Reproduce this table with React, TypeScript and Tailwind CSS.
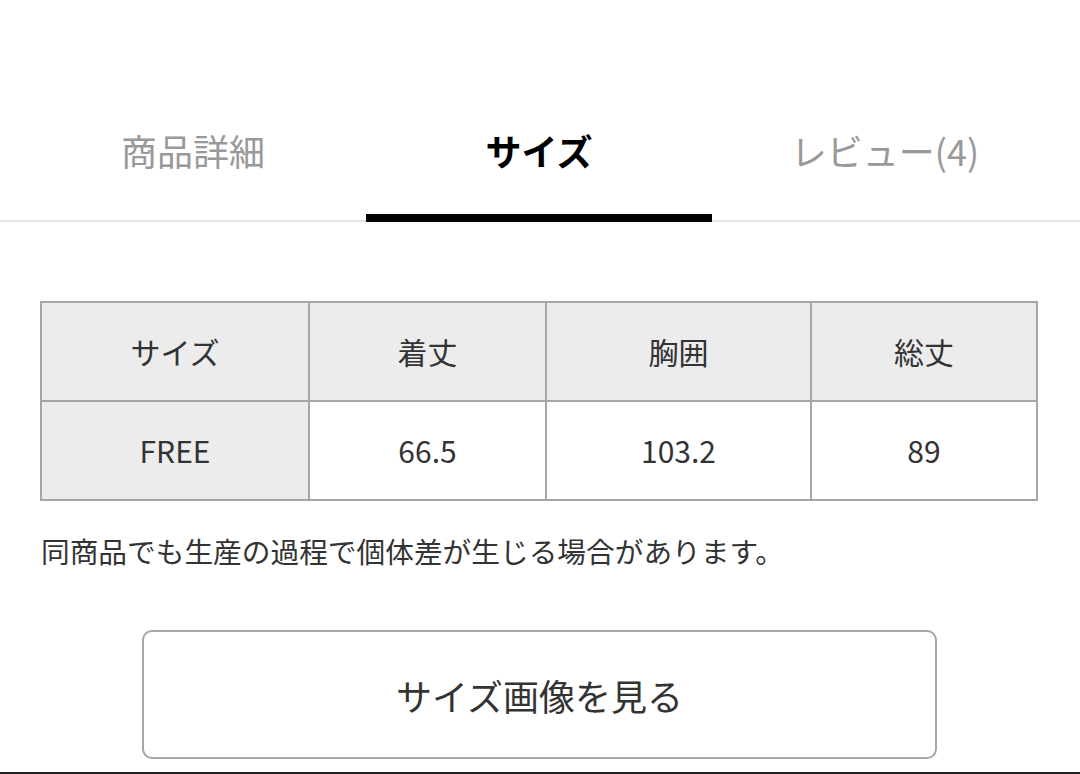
import React from 'react'

const font = { fontFamily: '"Noto Sans CJK JP", "Liberation Sans", sans-serif' }

const tabs = [
  { label: '商品詳細', active: false },
  { label: 'サイズ', active: true },
  { label: 'レビュー(4)', active: false },
]

const headers = ['サイズ', '着丈', '胸囲', '総丈']
const values = ['FREE', '66.5', '103.2', '89']
const colWidths = ['w-[268px]', 'w-[237px]', 'w-[265px]', 'flex-1']

export default function App() {
  return (
    <div className="flex h-[774px] w-[1080px] flex-col bg-white" style={font}>
      {/* tab bar */}
      <div className="mt-[104px] flex border-b-2 border-[#e4e4e4] pl-5 pr-[22px]">
        {tabs.map((tab) => (
          <div
            key={tab.label}
            className={
              tab.active
                ? 'relative flex h-[116px] w-[346px] items-start justify-center pt-[18px] text-[36px] font-bold leading-[56px] text-black'
                : 'relative flex h-[116px] w-[346px] items-start justify-center pt-[18px] text-[36px] leading-[56px] text-[#999]'
            }
          >
            {tab.label}
            {tab.active ? <div className="absolute -bottom-[2px] left-0 h-[8px] w-full bg-black" /> : null}
          </div>
        ))}
      </div>

      {/* size table */}
      <div className="ml-[40px] mt-[79px] w-[998px] border-2 border-[#a6a6a6] text-[30px] text-[#333]">
        <div className="flex h-[99px] border-b-2 border-[#a6a6a6] bg-[#ececec]">
          {headers.map((h, i) => (
            <div
              key={h}
              className={
                i < 3
                  ? `${colWidths[i]} flex items-center justify-center border-r-2 border-[#a6a6a6]`
                  : `${colWidths[i]} flex items-center justify-center`
              }
            >
              {h}
            </div>
          ))}
        </div>
        <div className="flex h-[97px]">
          {values.map((v, i) => (
            <div
              key={v}
              className={
                i === 0
                  ? `${colWidths[i]} flex items-center justify-center border-r-2 border-[#a6a6a6] bg-[#ececec]`
                  : i < 3
                    ? `${colWidths[i]} flex items-center justify-center border-r-2 border-[#a6a6a6]`
                    : `${colWidths[i]} flex items-center justify-center`
              }
            >
              {v}
            </div>
          ))}
        </div>
      </div>

      <p className="ml-[41px] mt-[33px] text-[28.7px] leading-[34px] text-[#333]">
        同商品でも生産の過程で個体差が生じる場合があります。
      </p>

      <button
        type="button"
        className="ml-[142px] mt-[62px] flex h-[129px] w-[795px] items-center justify-center rounded-[10px] border-2 border-[#a6a6a6] bg-white text-[36px] text-[#333]"
      >
        サイズ画像を見る
      </button>

      <div className="mt-auto h-[2px] w-full bg-[#222]" />
    </div>
  )
}
